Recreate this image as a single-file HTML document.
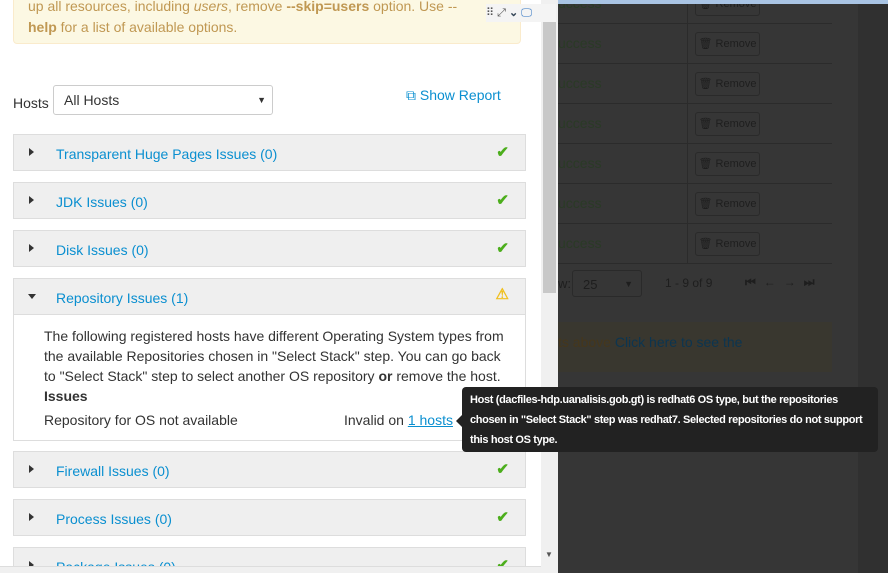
<!DOCTYPE html>
<html><head><style>
body{margin:0;width:888px;height:573px;overflow:hidden;font-family:"Liberation Sans",sans-serif;background:#333;position:relative}
.l{position:absolute;left:0;top:0;width:541px;height:573px;background:#fff;overflow:hidden}
.warn{position:absolute;left:13px;top:-15px;width:508px;height:59px;background:#fcf8e3;border:1px solid #faebcc;border-radius:4px;color:#c09853;font-size:14px;line-height:21px;padding:0 0 0 14px;box-sizing:border-box}
.p{position:absolute;left:13px;width:513px;height:37px;background:#efefef;border:1px solid #ddd;box-sizing:border-box}
.p .t{position:absolute;left:42px;top:11px;color:#0a8fd0;font-size:14px}
.p .a{position:absolute;left:15px;top:13px;width:0;height:0;border-top:4px solid transparent;border-bottom:4px solid transparent;border-left:5px solid #333}
.p .c{position:absolute;right:16px;top:8px;color:#4cae1c;font-size:15px;font-weight:bold}
.sb{position:absolute;left:541px;top:0;width:17px;height:573px;background:#f0f0f0}
.th{position:absolute;left:543px;top:10px;width:13px;height:283px;background:#c8c8c8}
.row{position:absolute;left:558px;width:274px;height:39px;border-bottom:1px solid #2b2b2b}
.row span{position:absolute;left:0;top:11px;color:#2a3a26;font-size:14px}
.row b{position:absolute;left:137px;top:8px;width:63px;height:22px;border:1px solid #2a2a2a;border-radius:3px;background:#363636;font-weight:normal;font-size:11px;color:#1e1e1e;line-height:22px;text-align:center}
</style></head><body>
<div style="position:absolute;left:558px;top:0;width:300px;height:573px;background:#363636"></div>
<div style="position:absolute;left:858px;top:0;width:30px;height:573px;background:#303030"></div>
<div style="position:absolute;left:687px;top:0;width:1px;height:263px;background:#2b2b2b"></div>
<div class="row" style="top:-16px"><span>uccess</span><b>🗑 Remove</b></div>
<div class="row" style="top:24px"><span>uccess</span><b>🗑 Remove</b></div>
<div class="row" style="top:64px"><span>uccess</span><b>🗑 Remove</b></div>
<div class="row" style="top:104px"><span>uccess</span><b>🗑 Remove</b></div>
<div class="row" style="top:144px"><span>uccess</span><b>🗑 Remove</b></div>
<div class="row" style="top:184px"><span>uccess</span><b>🗑 Remove</b></div>
<div class="row" style="top:224px"><span>uccess</span><b>🗑 Remove</b></div>
<div style="position:absolute;left:558px;top:276px;color:#1e1e1e;font-size:13px">w:</div>
<div style="position:absolute;left:572px;top:270px;width:70px;height:27px;border:1px solid #2a2a2a;border-radius:3px;color:#1e1e1e;font-size:13px;line-height:27px;padding-left:10px;box-sizing:border-box">25<span style="position:absolute;right:8px;font-size:9px">▼</span></div>
<div style="position:absolute;left:665px;top:276px;color:#1e1e1e;font-size:12px">1 - 9 of 9</div>
<div style="position:absolute;left:745px;top:275px;color:#1e1e1e;font-size:12px;font-weight:bold;letter-spacing:8px">⏮←→⏭</div>
<div style="position:absolute;left:558px;top:322px;width:274px;height:50px;background:#39372f"></div>
<div style="position:absolute;left:558px;top:334px;font-size:14px;color:#45371c">ts above <span style="color:#0c3550">Click here to see the</span></div>
<div style="position:absolute;left:0;top:0;width:888px;height:4px;background:#a9c4e4"></div>
<div class="l">
<div class="warn"><div style="margin-top:10px">up all resources, including <i>users</i>, remove <b>--skip=users</b> option. Use --<br><b>help</b> for a list of available options.</div></div>
<div style="position:absolute;left:13px;top:95px;font-size:14px;color:#333">Hosts</div>
<div style="position:absolute;left:53px;top:85px;width:220px;height:30px;border:1px solid #ccc;border-radius:3px;box-sizing:border-box;font-size:14px;color:#333;padding:6px 10px">All Hosts<span style="position:absolute;right:6px;top:9px;font-size:9px">▼</span></div>
<div style="position:absolute;left:406px;top:87px;font-size:14px;color:#0a8fd0">⧉ Show Report</div>
<div class="p" style="top:134px"><i class="a"></i><span class="t">Transparent Huge Pages Issues (0)</span><span class="c">✔</span></div>
<div class="p" style="top:182px"><i class="a"></i><span class="t">JDK Issues (0)</span><span class="c">✔</span></div>
<div class="p" style="top:230px"><i class="a"></i><span class="t">Disk Issues (0)</span><span class="c">✔</span></div>
<div class="p" style="top:278px"><i class="a" style="border:4px solid transparent;border-top:5px solid #333;border-bottom:0;top:15px;left:14px"></i><span class="t">Repository Issues (1)</span><span class="c" style="color:#f0c020;top:6px">⚠</span></div>
<div style="position:absolute;left:13px;top:314px;width:513px;height:127px;border:1px solid #ddd;border-top:0;box-sizing:border-box;font-size:14px;color:#333;line-height:20px;padding:12px 0 0 30px">
The following registered hosts have different Operating System types from<br>the available Repositories chosen in "Select Stack" step. You can go back<br>to "Select Stack" step to select another OS repository <b>or</b> remove the host.<br><b>Issues</b><br><div style="margin-top:4px">Repository for OS not available<span style="position:absolute;left:330px">Invalid on <u style="color:#0a8fd0">1 hosts</u></span></div></div>
<div class="p" style="top:451px"><i class="a"></i><span class="t">Firewall Issues (0)</span><span class="c">✔</span></div>
<div class="p" style="top:499px"><i class="a"></i><span class="t">Process Issues (0)</span><span class="c">✔</span></div>
<div class="p" style="top:547px"><i class="a"></i><span class="t">Package Issues (0)</span><span class="c">✔</span></div>
<div style="position:absolute;left:0;top:566px;width:541px;height:7px;background:#f0f0f0;border-top:1px solid #ddd"></div>
</div>
<div class="sb"></div><div class="th"></div>
<div style="position:absolute;left:545px;top:550px;font-size:8px;color:#555">▼</div>
<div style="position:absolute;left:486px;top:4px;width:70px;height:18px;background:#f4f4f4;font-size:11px;color:#555;line-height:18px">⠿ ⤢ <b style="color:#345">⌄</b> <span style="color:#2a70c0">🖵</span></div>
<div style="position:absolute;left:462px;top:387px;width:416px;height:65px;background:#222;border-radius:4px;color:#fff;font-size:11px;font-weight:bold;line-height:20px;padding:3px 8px;box-sizing:border-box;letter-spacing:-0.35px">Host (dacfiles-hdp.uanalisis.gob.gt) is redhat6 OS type, but the repositories chosen in "Select Stack" step was redhat7. Selected repositories do not support this host OS type.</div>
<div style="position:absolute;left:456px;top:415px;border:6px solid transparent;border-right-color:#222;border-left:0"></div>
</body></html>
